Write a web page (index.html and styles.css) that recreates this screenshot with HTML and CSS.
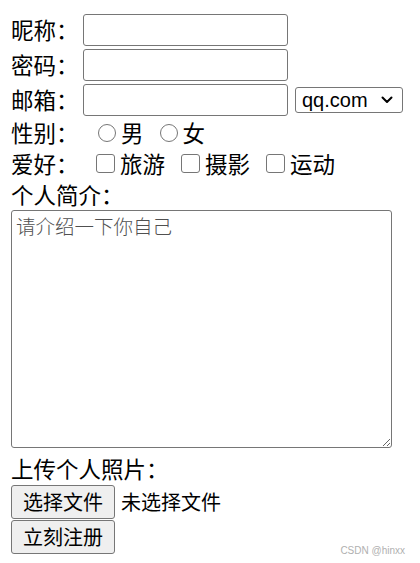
FILE: index.html
```html
<!DOCTYPE html>
<html lang="zh">
<head>
<meta charset="utf-8">
<link rel="stylesheet" href="styles.css">
</head>
<body>
<form class="form">
  <div class="row field">
    <span class="label">昵称：</span><input class="text" type="text">
  </div>
  <div class="row field">
    <span class="label">密码：</span><input class="text" type="password">
  </div>
  <div class="row field">
    <span class="label">邮箱：</span><input class="text" type="text">
    <span class="select"><span class="sel-text">qq.com</span>
      <svg class="chev" width="12" height="8" viewBox="0 0 12 8"><path d="M1.5 1.5 L6 6 L10.5 1.5" fill="none" stroke="#000" stroke-width="2" stroke-linecap="round" stroke-linejoin="round"/></svg>
    </span>
  </div>
  <div class="row line">
    <span class="label">性别：</span>
    <span class="opts sex">
      <label class="opt"><input class="radio" type="radio" name="sex">男</label>
      <label class="opt"><input class="radio" type="radio" name="sex">女</label>
    </span>
  </div>
  <div class="row line">
    <span class="label">爱好：</span>
    <span class="opts hobby">
      <label class="opt"><input class="check" type="checkbox">旅游</label>
      <label class="opt"><input class="check" type="checkbox">摄影</label>
      <label class="opt"><input class="check" type="checkbox">运动</label>
    </span>
  </div>
  <div class="row line">个人简介：</div>
  <div class="area">
    <textarea class="ta" placeholder="请介绍一下你自己"></textarea>
  </div>
  <div class="row upload-label">上传个人照片：</div>
  <div class="row btnrow">
    <button type="button" class="btn">选择文件</button><span class="nofile">未选择文件</span>
  </div>
  <div class="row btnrow2">
    <button type="button" class="btn">立刻注册</button>
  </div>
</form>
<div class="mark">CSDN @hinxx</div>
</body>
</html>
```
FILE: styles.css
```css
html, body {
  margin: 0;
  padding: 0;
  background: #fff;
}
body {
  width: 420px;
  height: 563px;
  overflow: hidden;
  position: relative;
  font-family: "Noto Sans CJK SC", "Liberation Sans", sans-serif;
  font-size: 22.5px;
  color: #000;
}
.form {
  padding: 12px 0 0 11px;
}
.row {
  display: flex;
  align-items: center;
  white-space: nowrap;
  line-height: 1;
}
.field {
  height: 35px;
}
.line {
  height: 31px;
}
.label {
  width: 72px;
  line-height: 1;
}
.text {
  box-sizing: border-box;
  width: 205px;
  height: 32px;
  border: 1px solid #767676;
  border-radius: 3px;
  margin: 0;
  padding: 0 4px;
  background: #fff;
}
.select {
  box-sizing: border-box;
  margin-left: 7px;
  width: 108px;
  height: 26px;
  border: 1px solid #767676;
  border-radius: 3px;
  display: flex;
  align-items: center;
  justify-content: space-between;
  padding: 0 9px 0 6px;
  font-family: "Liberation Sans", Arial, sans-serif;
  font-size: 20px;
}
.sel-text {
  line-height: 1;
  margin-top: 1px;
}
.opts {
  display: flex;
  align-items: center;
}
.sex {
  margin-left: 15px;
}
.sex .opt {
  margin-right: 16px;
}
.hobby {
  margin-left: 13px;
}
.hobby .opt {
  margin-right: 16px;
}
.opt {
  display: flex;
  align-items: center;
  line-height: 1;
}
.radio, .check {
  appearance: none;
  -webkit-appearance: none;
  box-sizing: border-box;
  margin: 0 5px 0 0;
  border: 1.5px solid #767676;
  background: #fff;
}
.radio {
  width: 18px;
  height: 18px;
  border-radius: 50%;
}
.check {
  width: 19px;
  height: 19px;
  border-radius: 3px;
}
.area {
  display: flex;
}
.ta {
  box-sizing: border-box;
  width: 381px;
  height: 238px;
  margin: 0;
  border: 1px solid #767676;
  border-radius: 3px;
  padding: 4px 4px;
  font-family: "Noto Sans CJK SC", sans-serif;
  font-size: 19.5px;
  font-weight: 300;
  line-height: 1.1;
  resize: both;
}
.ta::placeholder {
  color: #505050;
}
.upload-label {
  height: 36px;
  padding-top: 5px;
  box-sizing: border-box;
}
.btnrow, .btnrow2 {
  height: 35px;
}
.btn {
  box-sizing: border-box;
  width: 104px;
  height: 34px;
  margin: 0;
  padding: 0;
  border: 1px solid #767676;
  border-radius: 3px;
  background: #efefef;
  font-family: "Noto Sans CJK SC", sans-serif;
  font-size: 20px;
  color: #000;
  line-height: 1;
}
.nofile {
  margin-left: 6px;
  font-size: 20px;
}
.mark {
  position: absolute;
  right: 15px;
  bottom: 7px;
  font-family: "Liberation Sans", Arial, sans-serif;
  font-size: 10px;
  color: #b0b0b0;
}
```
